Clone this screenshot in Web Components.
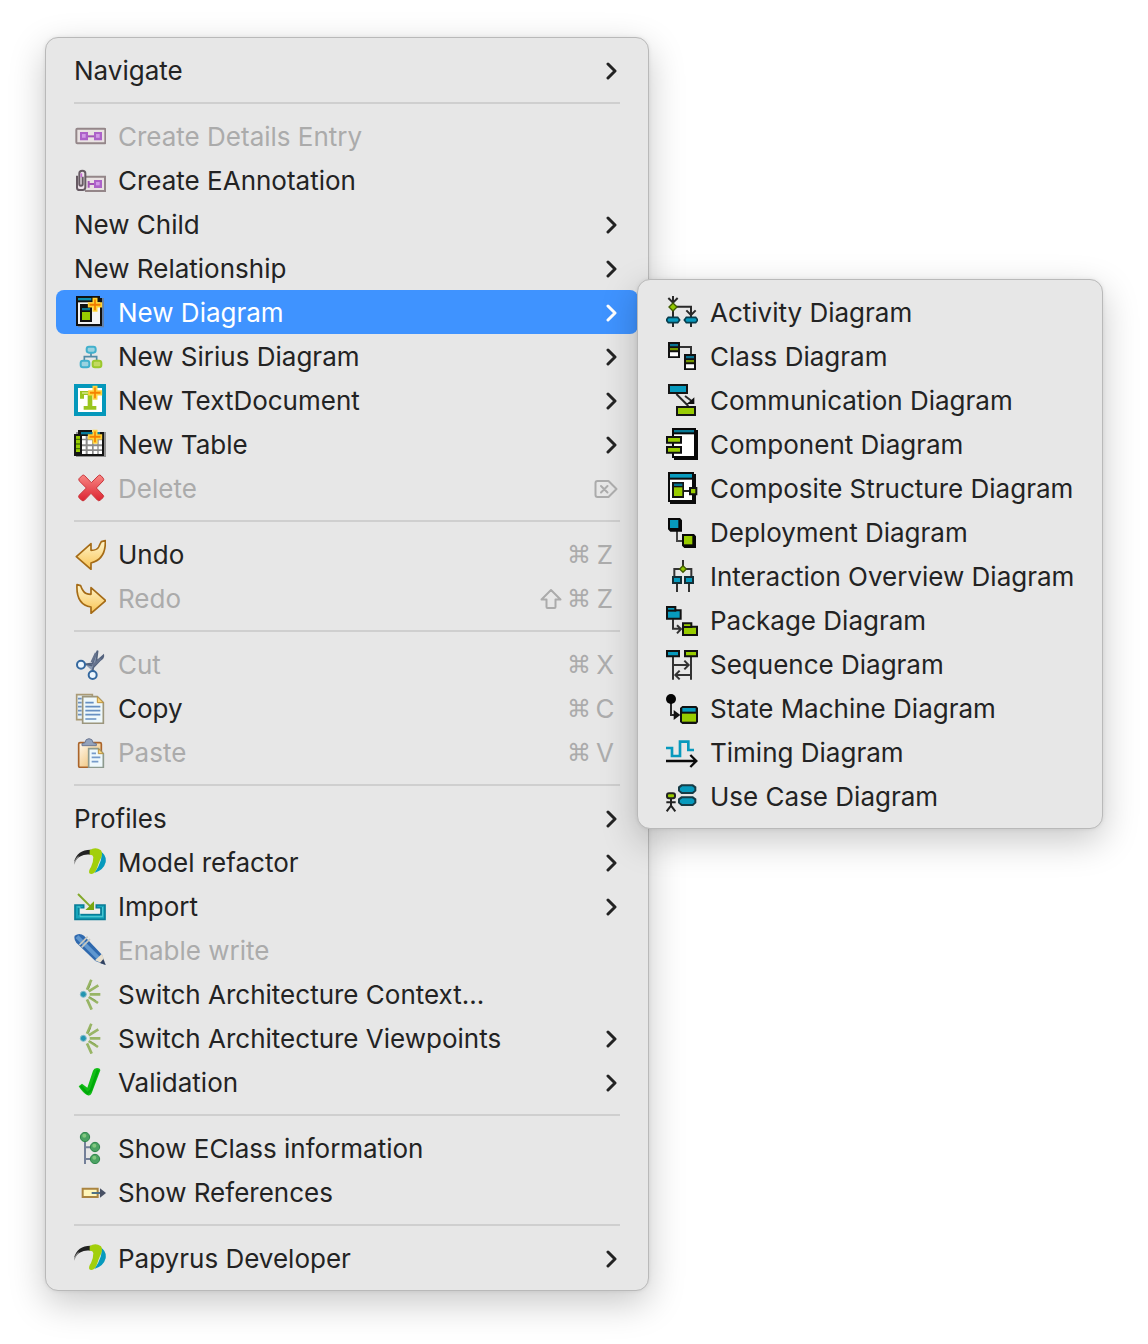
<!DOCTYPE html>
<html lang="en">
<head>
<meta charset="utf-8">
<title>Model context menu</title>
<style>
  body { margin: 0; min-height: 100vh; background: #fff; font-family: Inter, "Liberation Sans", sans-serif; color: #232323; }
</style>
</head>
<body>
<model-context-menu></model-context-menu>

<script>
const art = {
  details: ['102 270', `<rect x="109" y="296" width="87" height="44" rx="3" fill="#e9e2e2" stroke="#948689" stroke-width="6"/><path d="M141 319h24" stroke="#a354b5" stroke-width="6"/><path d="M120 306h24v25h-24zM162 306h24v25h-24z" fill="#ad62c9"/><path d="M126 312h11v11h-11zM168 312h11v11h-11z" fill="#d29ae6"/>`],
  annotation: ['102 402', `<path d="M136 440h59v43h-60" fill="#e9e2e2" stroke="#948689" stroke-width="6"/><path d="M146 453v20M146 462h18" stroke="#a354b5" stroke-width="6"/><path d="M162 450h24v24h-24z" fill="#ad62c9"/><path d="M168 456h11v10h-11z" fill="#d29ae6"/><path d="M111 437v36q0 7 8 7h9q8 0 8-8v-42q0-8-9-8t-9 8v33q0 4 5 4t5-4v-23" fill="#eee2ea" stroke="#665a63" stroke-width="6"/><path d="M124 430v12" stroke="#c46bd4" stroke-width="5"/>`],
  diagram: ['24 18', `<path d="M34 24h80v88H36z" fill="#777" opacity=".65"/><path d="M30 18h72v6h6v84H30z" fill="#111"/><path d="M36 24h40v7H36z" fill="#0c8fb0"/><path d="M36 37h66v65H36z" fill="#f4f4f4"/><path d="M42 42h36v54H42z" fill="#111"/><path d="M48 54h24v7H48z" fill="#08718b"/><path d="M48 66h24v24H48z" fill="#9c0"/><path d="M82 26h10v13h14v11H92v13H82V50H68V39h14z" fill="#f07b00" stroke="#ffd331" stroke-width="5"/>`],
  sirius: ['24 150', `<path d="M75 188v12M55 211v-11h37v11" fill="none" stroke="#528ba6" stroke-width="5"/><rect x="62" y="170" width="27" height="18" rx="7" fill="#9bd3e0" stroke="#42b0cc" stroke-width="6"/><rect x="44" y="212" width="26" height="20" rx="7" fill="#9bd3e0" stroke="#42b0cc" stroke-width="6"/><rect x="80" y="212" width="26" height="20" rx="7" fill="#c3d960" stroke="#9bc82d" stroke-width="6"/>`],
  text: ['24 24', `<path d="M24 24h96v96H24z" fill="#0598bb"/><path d="M36 36h72v72H36z" fill="#fff"/><path d="M42 45h51v12H79v33h12v11H53V90h12V57H54v11H42z" fill="#9ac51f"/><path d="M48 48h18v6H48z" fill="#c7dd72"/><path d="M82 32h10v13h14v11H92v13H82V56H69V45h13z" fill="#f58200" stroke="#ffd53f" stroke-width="5"/>`],
  table: ['24 156', `<path d="M30 168h90v75H30z" fill="#666" opacity=".65"/><path d="M24 174h12v-12h42v6h36v72H24z" fill="#151515"/><path d="M45 168h57v7H45z" fill="#087c9c"/><path d="M30 180h12v48H30z" fill="#98cc00"/><path d="M48 180h60v54H48z" fill="#8b8b8b"/><path d="M30 190h12M30 204h12M30 218h12" stroke="#477600" stroke-width="4"/><path d="M48 180h11v8H48zM65 180h13v8H65zM48 193h11v12H48zM65 193h13v12H65zM83 193h11v12H83zM98 193h10v12H98zM48 211h11v9H48zM65 211h13v9H65zM83 211h11v9H83zM98 211h10v9H98zM48 225h11v9H48zM65 225h13v9H65zM83 225h11v9H83zM98 225h10v9H98z" fill="#fff"/><path d="M82 164h10v13h14v11H92v13H82v-13H68v-11h14z" fill="#f58200" stroke="#ffd53f" stroke-width="5"/>`],
  delete: ['24 288', `<defs><linearGradient id="g" x2="0" y2="1"><stop stop-color="#f88683"/><stop offset="1" stop-color="#dc2431"/></linearGradient></defs><path d="M39 308l10-10q4-2 7 1l20 21 21-21q4-4 8 0l7 8q3 4-1 8l-20 21 20 21q4 4 0 8l-9 8q-4 3-8-1l-19-20-20 21q-4 3-8 0l-8-8q-3-4 1-8l21-21-20-20q-4-4-2-8z" fill="url(#g)" stroke="#c9353b" stroke-width="3"/>`],
  undo: ['24 24', `<defs><linearGradient id="g" x2="0" y2="1"><stop stop-color="#fff6ce"/><stop offset="1" stop-color="#f9c353"/></linearGradient></defs><path d="M31 80l44-39v20q18 0 23-10 4-9 8-16l12-3c1 31-7 58-43 67v19z" fill="url(#g)" stroke="#a56b16" stroke-width="5" stroke-linejoin="round"/>`],
  redo: ['24 156', `<defs><linearGradient id="g" x2="0" y2="1"><stop stop-color="#fff6ce"/><stop offset="1" stop-color="#f9c353"/></linearGradient></defs><path d="M119 212l-44 38v-19c-36-6-44-33-42-67l11 3q2 7 8 16 6 10 23 10v-20z" fill="url(#g)" stroke="#a56b16" stroke-width="5" stroke-linejoin="round"/>`],
  cut: ['24 24', `<path d="M57 73l23-3 7-22 8-16-4 33 21-19q1 8-9 14L82 82l-2 12M58 72l21 5" fill="#8b9ab2" stroke="#53627d" stroke-width="5"/><path d="M77 67l13-28M80 77l24-21" stroke="#66738d" stroke-width="7"/><circle cx="45" cy="74" r="12" fill="#edf7ff" stroke="#34689f" stroke-width="6"/><circle cx="80" cy="105" r="12" fill="#edf7ff" stroke="#34689f" stroke-width="6"/>`],
  copy: ['24 156', `<path d="M32 164h47v75H32z" fill="#e7f2f8" stroke="#aa9a75" stroke-width="5"/><path d="M36 176h11M36 188h11M36 200h11M36 212h11M36 224h11" stroke="#6e91bd" stroke-width="5"/><path d="M50 170h44l18 18v62H50z" fill="#eef8fb" stroke="#9c967d" stroke-width="5"/><path d="M94 170v18h18z" fill="#f8d681" stroke="#bd943f" stroke-width="3"/><path d="M58 188h25M58 200h45M58 212h45M58 224h45M58 237h33" stroke="#668fc1" stroke-width="5"/>`],
  paste: ['24 288', `<defs><linearGradient id="g" x2="1" y2="1"><stop stop-color="#fffaf0"/><stop offset="1" stop-color="#edb65d"/></linearGradient></defs><rect x="38" y="308" width="68" height="74" rx="4" fill="url(#g)" stroke="#aa642a" stroke-width="5"/><path d="M48 317v-6l9-3q1-12 12-12t12 12l10 3v6z" fill="#93a3bc" stroke="#6d7893" stroke-width="3"/><path d="M68 326h29l15 15v42H68z" fill="#eef8fc" stroke="#8d9a8e" stroke-width="5"/><path d="M97 326v15h15z" fill="#f8d681" stroke="#b99443" stroke-width="3"/><path d="M77 340h13M77 352h26M77 365h20" stroke="#769bca" stroke-width="5"/>`],
  papyrus: ['24 18', `<path d="M24 66C30 40 50 28 76 29l-3 15C52 41 37 50 24 66z" fill="#222"/><path d="M24 74q1-18 16-28-8 12-16 28z" fill="#888"/><path d="M103 34q19 11 16 33-6 24-34 32 14-20 19-37 5-16-1-28z" fill="#079abd"/><path d="M71 31q17-13 34 0c7 11 0 24-5 34-6 12-6 24-16 34q-8 5-14 1-3-8 5-19 7-13 7-30-2-8-11-7z" fill="#a2cf0b"/>`],
  import: ['24 150', `<path d="M27 195h26v9H39v19h66v-19H91v-9h26v43H27z" fill="#16a6bc" stroke="#087c96" stroke-width="5"/><path d="M34 201h8v29h68v-29" fill="none" stroke="#57cbd5" stroke-width="3"/><path d="M42 206h60v15H42z" fill="#eee"/><path d="M36 162l37 37" stroke="#83a92b" stroke-width="6"/><path d="M84 184v26H58l10-9 7-9z" fill="#79a711"/>`],
  pencil: ['24 282', `<path d="M26 287q14-10 28 0l54 57 11 31-31-12-57-55q-8-9-5-21z" fill="#2f69ae"/><path d="M33 290l63 63" stroke="#5f97cf" stroke-width="12"/><path d="M47 322l25-25M40 315l25-25" stroke="#c8c8c0" stroke-width="5"/><path d="M87 361l21-20 11 34z" fill="#e8dfcd"/><path d="M102 369l10-12 7 18z" fill="#314261"/>`],
  architecture: ['24 24', `<path d="M63 59l13-30M68 64l29-18M71 73h32M68 81l28 18M63 88l14 31" stroke="#98b565" stroke-width="8"/><path d="M67 58l7-17M72 82l18 10" stroke="#86a557" stroke-width="3"/><circle cx="52" cy="73" r="9" fill="#2395b1" stroke="#85bdcb" stroke-width="3"/>`],
  check: ['24 288', `<path d="M38 349l10-8 16 12 17-51q3-8 12-8t10 7L77 370q-5 9-12 6-14-6-27-27z" fill="#12bd16"/><path d="M44 348l20 22 11-10 21-60" fill="none" stroke="#00a90a" stroke-width="7"/>`],
  eclass: ['24 21', `<path d="M57 47v70M57 67h24M57 102h24" fill="none" stroke="#748099" stroke-width="6"/><g fill="#4ba263" stroke="#2d8549" stroke-width="3"><circle cx="57" cy="36" r="14"/><circle cx="87" cy="66" r="14"/><circle cx="87" cy="102" r="14"/></g><g fill="#82c87f"><circle cx="55" cy="32" r="6"/><circle cx="85" cy="62" r="6"/><circle cx="85" cy="98" r="6"/></g>`],
  references: ['24 153', `<path d="M50 191h45v25H50z" fill="#fff7ba" stroke="#aa8440" stroke-width="6"/><path d="M77 204h30" stroke="#4f7184" stroke-width="6"/><path d="M102 190l18 14-18 14z" fill="#485064"/>`],
  activity: ['33 18', `<path d="M54 18v93M54 50h54v61M40 24l14 14 14-14M94 61l14 14 14-14" fill="none" stroke="#292929" stroke-width="6"/><path d="M54 39l12 12-12 12-12-12z" fill="#91c800" stroke="#405b00" stroke-width="4"/><path d="M40 82h28l6 8-6 8H40l-6-8zM94 82h28l6 8-6 8H94l-6-8z" fill="#0799bd" stroke="#083d4c" stroke-width="5"/>`],
  class: ['33 150', `<path d="M75 171h33v24" fill="none" stroke="#333" stroke-width="6"/><path d="M39 156h36v48H39zM87 192h36v48H87z" fill="#111"/><path d="M45 162h24v7H45zM93 198h24v7H93z" fill="#087391"/><path d="M45 174h24v7H45zM93 210h24v7H93z" fill="#759900"/><path d="M45 187h24v12H45zM93 223h24v12H93z" fill="#fff"/>`],
  communication: ['33 282', `<path d="M64 312l36 36M90 318l20 15" stroke="#292929" stroke-width="6"/><path d="M118 322v20H94l11-8z" fill="#111"/><path d="M42 285h54v24H42z" fill="#079abd" stroke="#151515" stroke-width="6"/><path d="M66 351h54v24H66z" fill="#99cc05" stroke="#151515" stroke-width="6"/>`],
  component: ['33 414', `<path d="M51 414h72v6h6v90H57v-6h-6z" fill="#080808"/><path d="M57 420h60v7H57z" fill="#087995"/><path d="M57 433h60v65H57z" fill="#fff"/><path d="M36 441h42v17H36zM36 471h42v17H36z" fill="#98cc00" stroke="#101010" stroke-width="6"/>`],
  composite: ['33 21', `<path d="M39 21h78v6h6v90H45v-6h-6z" fill="#0b0b0b"/><path d="M45 27h66v11H45z" fill="#079abd"/><path d="M45 44h66v61H45z" fill="#fff"/><path d="M51 51h36v48H51z" fill="#141414"/><path d="M57 56h25v7H57z" fill="#087391"/><path d="M57 67h25v26H57z" fill="#9c0"/><path d="M86 78h20" stroke="#222" stroke-width="6"/><path d="M105 69h19v19h-19z" fill="#9c0" stroke="#111" stroke-width="6"/>`],
  deployment: ['33 153', `<path d="M66 193v35h22" fill="none" stroke="#444" stroke-width="6"/><path d="M39 159h36l6 7v34H46l-7-7zM81 207h36l6 7v35H88l-7-7z" fill="#080808"/><path d="M45 165h25v24H45z" fill="#079abd"/><path d="M87 213h25v25H87z" fill="#98cc00"/>`],
  interaction: ['33 285', `<path d="M84 285v19M75 312H58v23M66 355v26M93 312h16v23M102 355v26" fill="none" stroke="#333" stroke-width="6"/><path d="M84 302l10 10-10 10-10-10z" fill="#91c800" stroke="#405b00" stroke-width="4"/><path d="M54 336h24v18H54zM90 336h24v18H90z" fill="#079abd" stroke="#142e36" stroke-width="6"/>`],
  package: ['33 417', `<path d="M54 463v28h26M66 481l12 11-12 13" fill="none" stroke="#333" stroke-width="6"/><path d="M36 426h25v10h16v25H36z" fill="#079abd" stroke="#111" stroke-width="6"/><path d="M36 437h28" stroke="#111" stroke-width="6"/><path d="M84 475h25v10h17v25H84z" fill="#98cc00" stroke="#111" stroke-width="6"/><path d="M84 486h28" stroke="#111" stroke-width="6"/>`],
  sequence: ['33 24', `<path d="M54 51v68M108 51v68M54 75h48M88 62l13 13-13 13M108 105H60M74 92l-13 13 13 13" fill="none" stroke="#333" stroke-width="6"/><path d="M36 33h36v16H36z" fill="#079abd" stroke="#111" stroke-width="6"/><path d="M90 33h36v16H90z" fill="#98cc00" stroke="#111" stroke-width="6"/>`],
  state: ['33 156', `<path d="M48 189v36h20" fill="none" stroke="#292929" stroke-width="6"/><circle cx="48" cy="177" r="15" fill="#050505"/><path d="M56 210l20 15-20 15z" fill="#111"/><path d="M82 198h42l5 6v42l-5 6H82l-7-6v-42z" fill="#111"/><path d="M82 204h40v11H82z" fill="#079abd"/><path d="M81 221h42v24H81z" fill="#98cc00"/>`],
  timing: ['33 288', `<path d="M33 324h18v24h24v-43h25v25h17" fill="none" stroke="#0799bd" stroke-width="8"/><path d="M33 363h88M106 345l18 18-18 18" fill="none" stroke="#0a0a0a" stroke-width="7"/>`],
  usecase: ['33 420', `<path d="M48 476v20M34 487h28M35 514l13-17 13 17" fill="none" stroke="#222" stroke-width="6"/><rect x="36" y="460" width="24" height="15" rx="6" fill="#98cc00" stroke="#222" stroke-width="6"/><path d="M80 436h33l8 6v10l-8 7H80l-8-7v-10zM80 472h33l8 6v10l-8 7H80l-8-7v-10z" fill="#079abd" stroke="#163c47" stroke-width="6"/>`]
};

class MenuIcon extends HTMLElement {
  connectedCallback() {
    const [origin, shapes] = art[this.getAttribute('name')];
    this.attachShadow({ mode: 'open' }).innerHTML = `
      <style>:host{display:block;flex:none;width:32px;height:32px} svg{display:block;width:100%;height:100%}</style>
      <svg viewBox="${origin} 96 96" aria-hidden="true">${shapes}</svg>`;
  }
}

class MenuSeparator extends HTMLElement {
  connectedCallback() {
    this.attachShadow({ mode: 'open' }).innerHTML = `
      <style>:host{display:block;padding:10px 18px} hr{margin:0;border:0;height:2px;background:#cfcfcf}</style><hr>`;
  }
}

class MenuShortcut extends HTMLElement {
  connectedCallback() {
    const glyphs = {
      shift: '<svg viewBox="0 0 24 24"><path d="M12 3l9.500 9.500h-5v7.500q0 1-1 1h-7q-1 0-1-1v-7.500h-5z"/></svg>',
      del: '<svg viewBox="0 0 24 24"><path d="M3.500 4h11l8 8-8 8h-11q-2 0-2-2V6q0-2 2-2zM7 9l6.500 6.500M13.500 9L7 15.500"/></svg>',
      cmd: '<span class="cmd">⌘</span>'
    };
    const parts = this.getAttribute('keys').split(' ').map(k => glyphs[k] || `<span class="key">${k}</span>`);
    this.attachShadow({ mode: 'open' }).innerHTML = `
      <style>
        :host{display:block;color:#ababab}
        kbd{display:flex;align-items:center;gap:4px;padding-top:2px;padding-right:5px;font:inherit}
        :host([keys=del]) kbd{padding-right:2px}
        svg{width:24px;height:24px;fill:none;stroke:currentColor;stroke-width:2;stroke-linejoin:round;stroke-linecap:round}
        span{text-align:center}
        .cmd{width:24px;font-family:"DejaVu Sans",sans-serif;font-size:24px;line-height:24px}
        .key{width:20px}
      </style><kbd>${parts.join('')}</kbd>`;
  }
}

class MenuItem extends HTMLElement {
  connectedCallback() {
    const has = n => this.hasAttribute(n), icon = this.getAttribute('icon'), keys = this.getAttribute('keys');
    this.attachShadow({ mode: 'open' }).innerHTML = `
      <style>
        :host{display:block;position:relative}
        button{display:flex;align-items:center;gap:12px;width:100%;height:44px;margin:0;padding:0 18px;border:0;border-radius:8px;background:none;color:inherit;font:inherit;text-align:left;white-space:nowrap}
        button:disabled{color:#ababab}
        :host([open]) button{background:#3f93ff;color:#fff}
        .label{flex:1;padding-top:1px}
        .more{flex:none;width:14px;height:20px;margin-right:2px;fill:none;stroke:currentColor;stroke-width:3;stroke-linecap:round;stroke-linejoin:round}
        .flyout{position:absolute;left:100%;top:-11px;margin-left:-1px}
      </style>
      <button type="button" role="menuitem" ${has('disabled') ? 'disabled' : ''} ${has('more') ? 'aria-haspopup="menu"' : ''}>
        ${icon ? `<menu-icon name="${icon}"></menu-icon>` : ''}
        <span class="label">${this.getAttribute('label')}</span>
        ${keys ? `<menu-shortcut keys="${keys}"></menu-shortcut>` : ''}
        ${has('more') ? '<svg class="more" viewBox="0 0 14 20" aria-hidden="true"><path d="M4 4l7 7-7 7"/></svg>' : ''}
      </button>
      ${has('open') ? '<div class="flyout"><slot></slot></div>' : ''}`;
  }
}

class MenuPanel extends HTMLElement {
  connectedCallback() {
    this.attachShadow({ mode: 'open' }).innerHTML = `
      <style>
        :host{display:block;box-sizing:border-box;width:max-content;min-width:var(--menu-width);padding:10px;border:1px solid #b9b9b9;border-radius:13px;background:#e7e7e7;box-shadow:0 12px 36px rgba(0,0,0,.22),0 0 4px rgba(0,0,0,.08);color:#232323}
      </style><div role="menu"><slot></slot></div>`;
  }
}

class ModelContextMenu extends HTMLElement {
  connectedCallback() {
    const item = ([label, icon, flags = '']) => `<menu-item label="${label}" ${icon ? `icon="${icon}"` : ''} ${flags}></menu-item>`;
    const list = rows => rows.map(r => r ? item(r) : '<menu-separator></menu-separator>').join('');
    const diagrams = [['Activity', 'activity'], ['Class', 'class'], ['Communication', 'communication'], ['Component', 'component'],
      ['Composite Structure', 'composite'], ['Deployment', 'deployment'], ['Interaction Overview', 'interaction'], ['Package', 'package'],
      ['Sequence', 'sequence'], ['State Machine', 'state'], ['Timing', 'timing'], ['Use Case', 'usecase']].map(([n, i]) => [n + ' Diagram', i]);
    this.attachShadow({ mode: 'open' }).innerHTML = `
      <style>
        :host{display:block;padding:37px 45px 53px;font-size:26px;line-height:32px}
        .main{--menu-width:604px} .sub{--menu-width:466px}
      </style>
      <menu-panel class="main">
        ${list([['Navigate', '', 'more'], null,
          ['Create Details Entry', 'details', 'disabled'], ['Create EAnnotation', 'annotation'],
          ['New Child', '', 'more'], ['New Relationship', '', 'more']])}
        <menu-item label="New Diagram" icon="diagram" more open><menu-panel class="sub">${list(diagrams)}</menu-panel></menu-item>
        ${list([['New Sirius Diagram', 'sirius', 'more'], ['New TextDocument', 'text', 'more'], ['New Table', 'table', 'more'],
          ['Delete', 'delete', 'disabled keys="del"'], null,
          ['Undo', 'undo', 'keys="cmd Z"'], ['Redo', 'redo', 'disabled keys="shift cmd Z"'], null,
          ['Cut', 'cut', 'disabled keys="cmd X"'], ['Copy', 'copy', 'keys="cmd C"'], ['Paste', 'paste', 'disabled keys="cmd V"'], null,
          ['Profiles', '', 'more'], ['Model refactor', 'papyrus', 'more'], ['Import', 'import', 'more'], ['Enable write', 'pencil', 'disabled'],
          ['Switch Architecture Context...', 'architecture'], ['Switch Architecture Viewpoints', 'architecture', 'more'], ['Validation', 'check', 'more'], null,
          ['Show EClass information', 'eclass'], ['Show References', 'references'], null,
          ['Papyrus Developer', 'papyrus', 'more']])}
      </menu-panel>`;
  }
}

customElements.define('menu-icon', MenuIcon);
customElements.define('menu-separator', MenuSeparator);
customElements.define('menu-shortcut', MenuShortcut);
customElements.define('menu-item', MenuItem);
customElements.define('menu-panel', MenuPanel);
customElements.define('model-context-menu', ModelContextMenu);
</script>
</body>
</html>
